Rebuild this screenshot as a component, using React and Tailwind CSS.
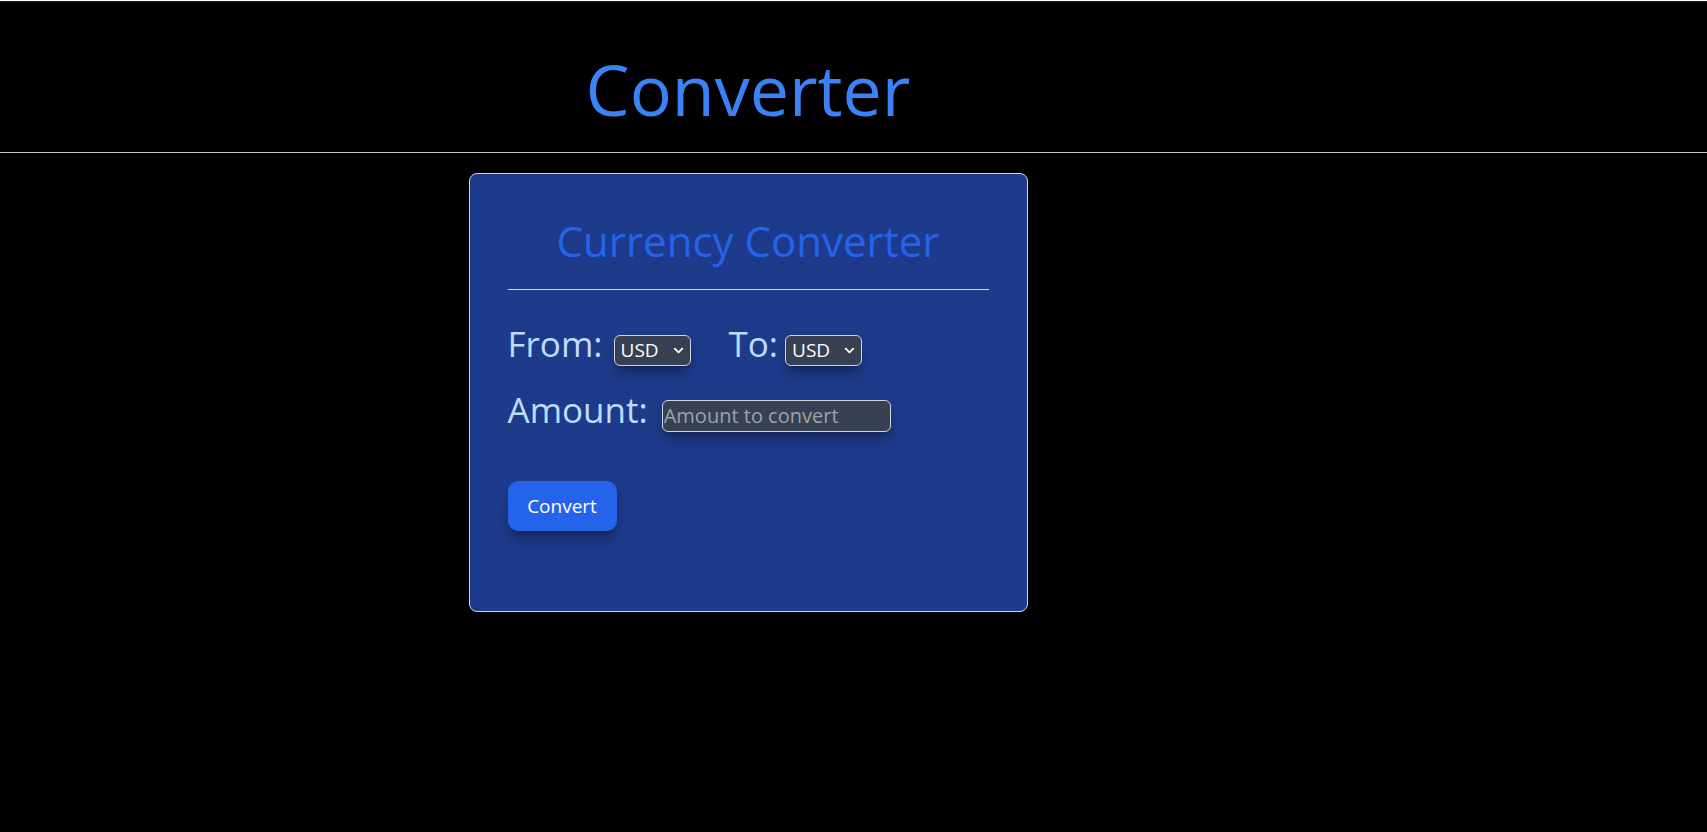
import { ChevronDown } from "lucide-react";

const font = { fontFamily: '"Open Sans", "Noto Sans", sans-serif' };

function CurrencySelect() {
  return (
    <span className="relative inline-block ml-[11px]">
      <select
        defaultValue="USD"
        className="appearance-none w-[77px] h-[31px] pl-[6px] rounded-md border border-[#d1d5db] bg-[#374151] text-white text-[19px] shadow-lg shadow-black/30 outline-none"
      >
        <option>USD</option>
        <option>EUR</option>
        <option>INR</option>
      </select>
      <ChevronDown
        className="absolute right-[5px] top-[8px] w-[15px] h-[15px] text-white pointer-events-none"
        strokeWidth={3}
      />
    </span>
  );
}

export default function App() {
  return (
    <div className="min-h-screen bg-black" style={font}>
      {/* thin top rule */}
      <div className="h-px mt-px bg-[#102018]" />

      {/* ==================== HEADER ==================== */}
      <div className="w-[1496px] h-[150px] pt-[52px] flex justify-center">
        <h1 className="text-[70px] leading-none text-[#3b82f6]">Converter</h1>
      </div>
      <div className="h-px bg-[#c8c8c8]" />

      {/* ==================== CARD ==================== */}
      <div className="w-[1496px] flex justify-center pt-5">
        <div className="w-[559px] h-[439px] rounded-lg border border-[#d1d5db] bg-[#1e3a8a] px-[38px] pt-[46px]">
          <h2 className="text-[42px] leading-none text-[#2563eb] text-center">
            Currency Converter
          </h2>
          <div className="mt-[27px] h-px bg-[#d1d5db]" />

          {/* From / To */}
          <div className="mt-[36px] h-[40px] flex items-baseline text-[#bfdbfe]">
            <span className="text-[35px] leading-none">From:</span>
            <CurrencySelect />
            <span className="text-[35px] leading-none ml-[38px]">To:</span>
            <span className="-ml-[4px]">
              <CurrencySelect />
            </span>
          </div>

          {/* Amount */}
          <div className="mt-[26px] h-[40px] flex items-baseline text-[#bfdbfe]">
            <span className="text-[35px] leading-none">Amount:</span>
            <input
              type="text"
              placeholder="Amount to convert"
              className="ml-[14px] w-[229px] h-[32px] px-px rounded-md border border-[#d1d5db] bg-[#374151] text-white text-[20px] placeholder:text-[#9ca3af] shadow-lg shadow-black/30 outline-none"
            />
          </div>

          <button className="mt-[49px] w-[109px] h-[50px] rounded-[10px] bg-[#2563eb] text-white text-[19px] shadow-lg shadow-black/30">
            Convert
          </button>
        </div>
      </div>
    </div>
  );
}
